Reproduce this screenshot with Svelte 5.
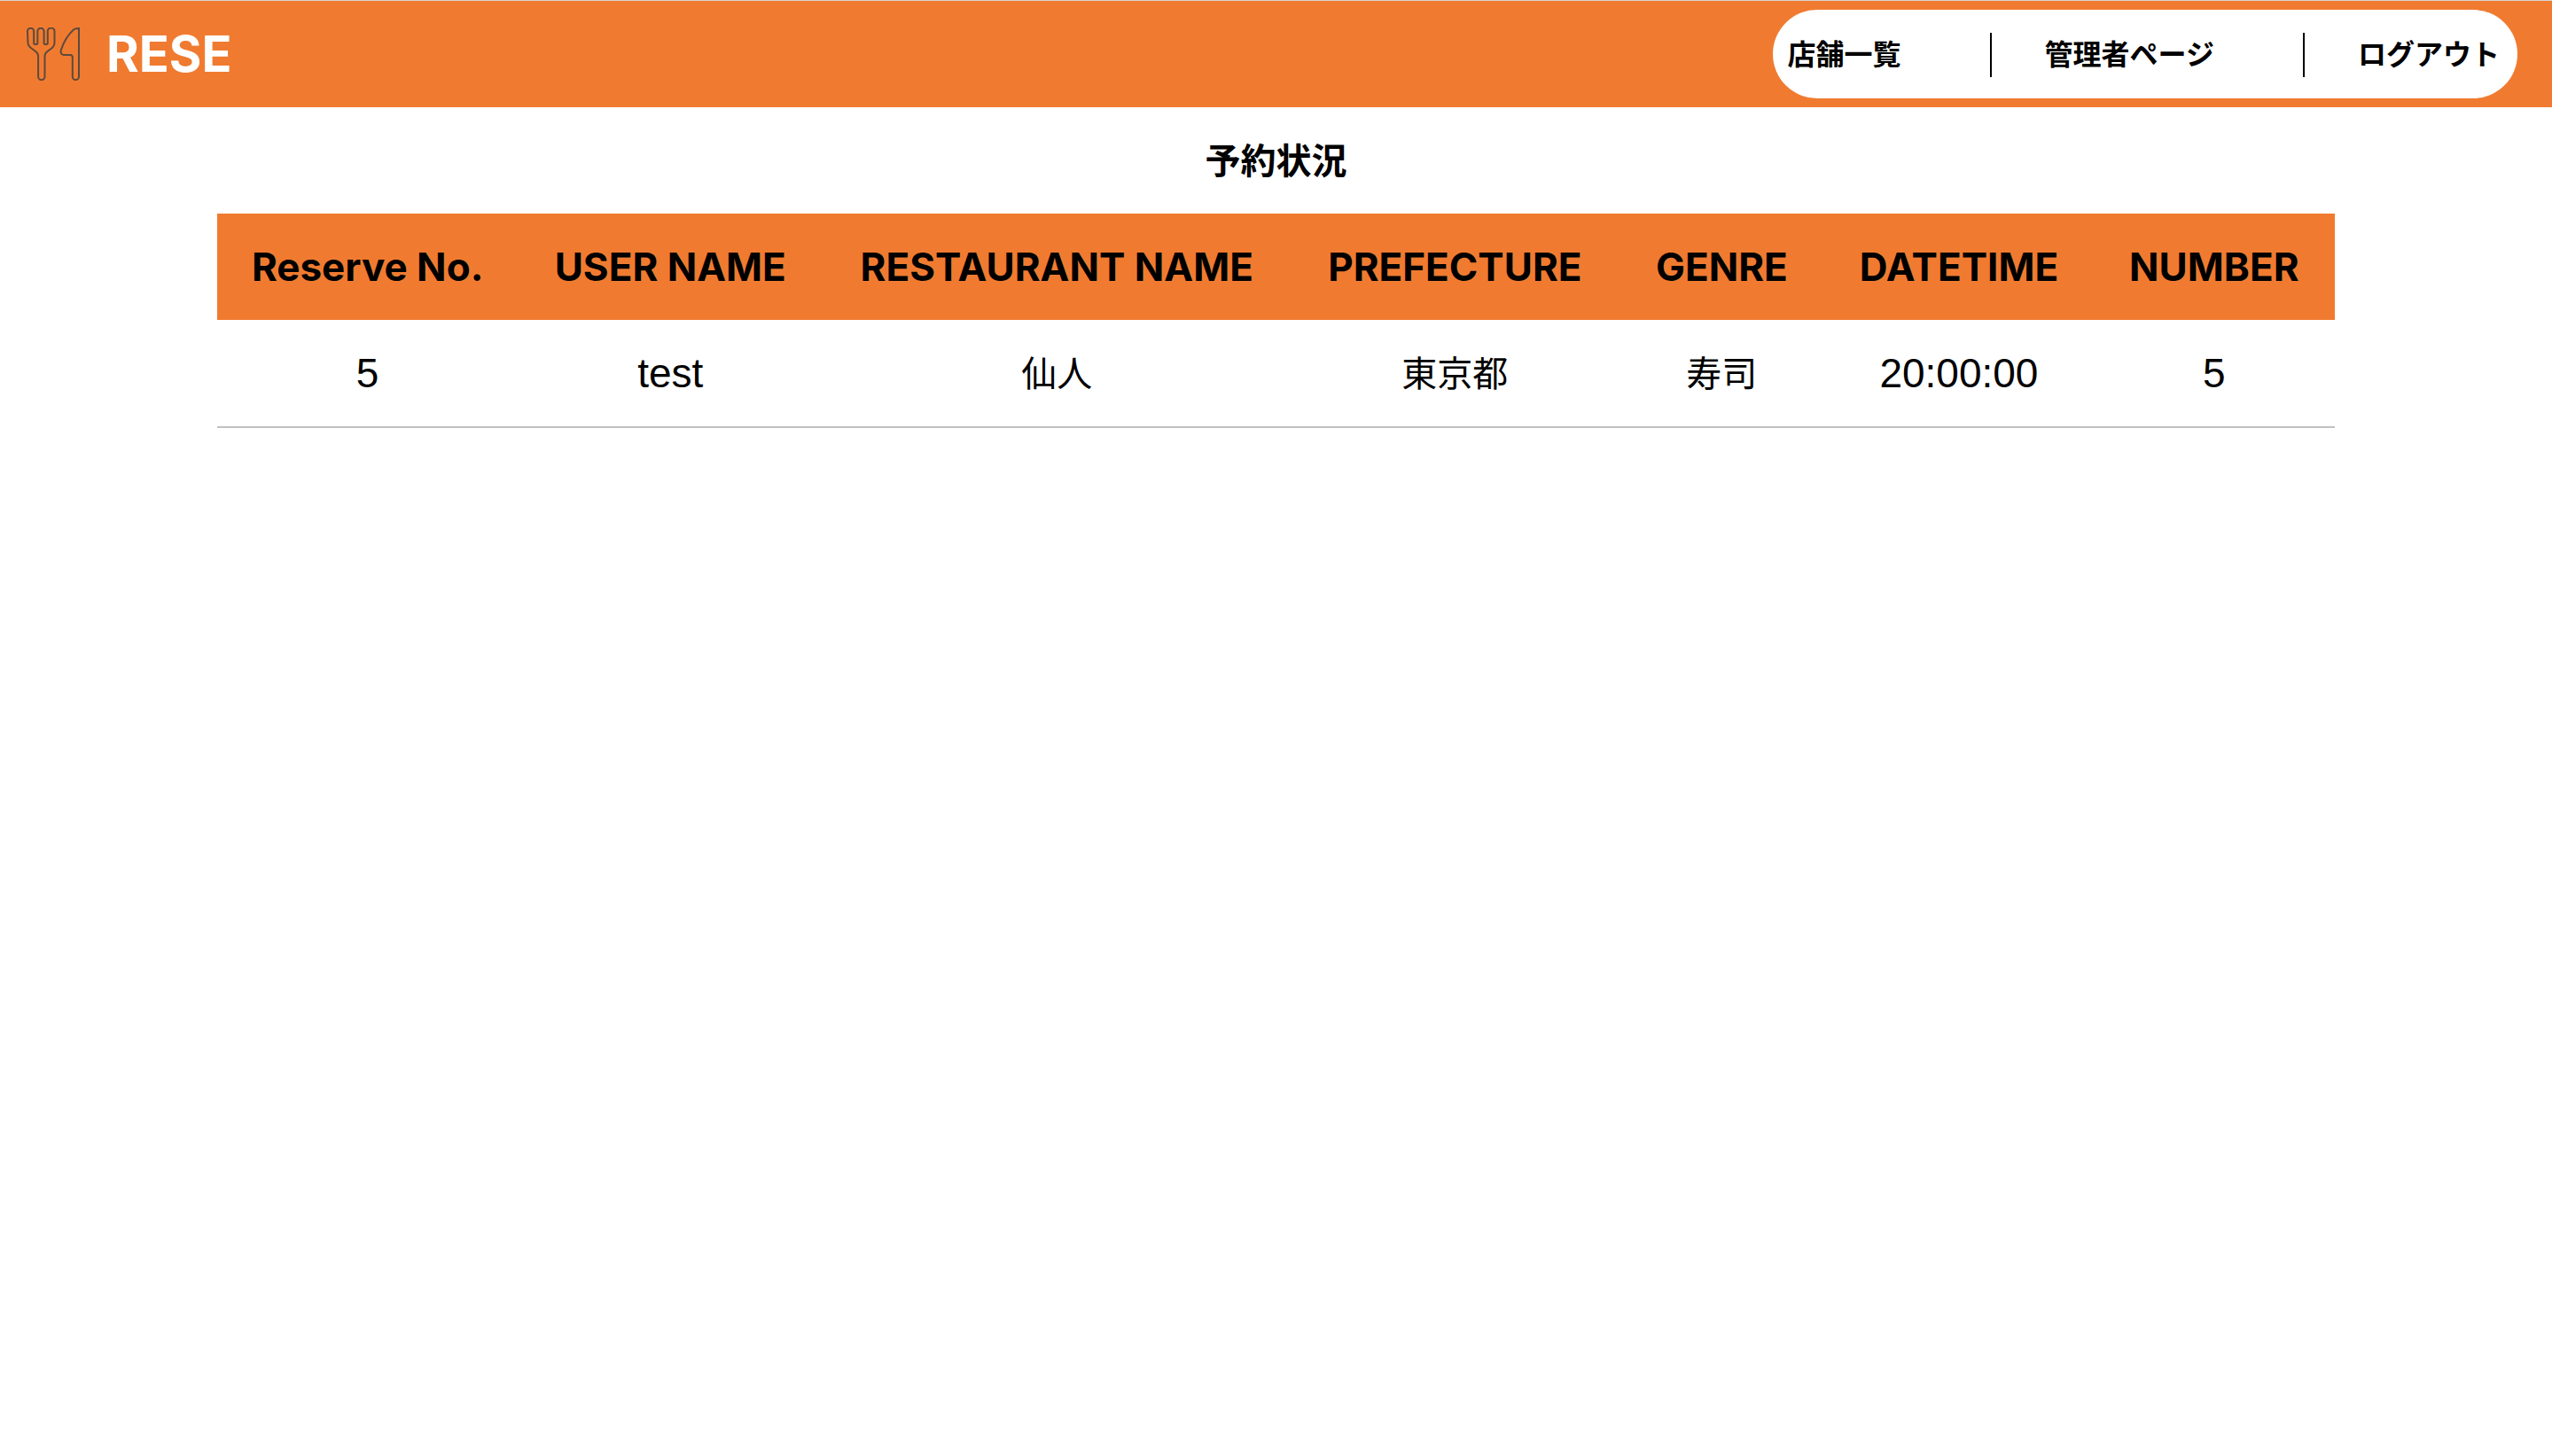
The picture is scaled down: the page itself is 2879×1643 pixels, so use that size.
<script>
  const links = [
    { label: '店舗一覧', href: '#shops' },
    { label: '管理者ページ', href: '#admin' },
    { label: 'ログアウト', href: '#logout' }
  ];

  const columns = [
    { label: 'Reserve No.', share: 14.2 },
    { label: 'USER NAME', share: 14.4 },
    { label: 'RESTAURANT NAME', share: 22.1 },
    { label: 'PREFECTURE', share: 15.5 },
    { label: 'GENRE', share: 9.7 },
    { label: 'DATETIME', share: 12.7 },
    { label: 'NUMBER', share: 11.4 }
  ];

  const reservations = [
    { id: 5, user: 'test', restaurant: '仙人', prefecture: '東京都', genre: '寿司', time: '20:00:00', number: 5 }
  ];
</script>

<header class="header">
  <a class="brand" href="#home">
    <svg class="logo" viewBox="0 0 60 60" aria-hidden="true">
      <path d="M1 4.300a3.600 3.600 0 0 1 7.200 0V17.500a1.500 1.500 0 0 0 1.500 1.500h1.200a1.500 1.500 0 0 0 1.500-1.500V4.300a3.600 3.600 0 0 1 7.200 0V17.500a1.500 1.500 0 0 0 1.500 1.500h1.200a1.500 1.500 0 0 0 1.500-1.500V4.300a3.600 3.600 0 0 1 7.700 0V17c0 3-1 5-4 7l-4 3c-2 1.500-3 3-3 5.500V55.500a3.700 3.700 0 0 1-7.400 0V32.500c0-2.500-1-4-3-5.500l-4-3c-3-2-4.600-4-4.600-7z" />
      <path d="M59 1V55.500a3.600 3.600 0 0 1-7.200 0V33.500a2.500 2.500 0 0 0-2.500-2.500H42c-3 0-4-3-3-6C42 16 48 7 53 2.500 55 .8 57 1 59 1z" />
    </svg>
    <span>RESE</span>
  </a>
  <nav class="nav">
    {#each links as link}
      <a class="nav-link" href={link.href}>{link.label}</a>
    {/each}
  </nav>
</header>

<main class="main">
  <h1 class="title">予約状況</h1>
  <table class="table">
    <colgroup>
      {#each columns as column}
        <col style:width="{column.share}%" />
      {/each}
    </colgroup>
    <thead>
      <tr>
        {#each columns as column}
          <th scope="col">{column.label}</th>
        {/each}
      </tr>
    </thead>
    <tbody>
      {#each reservations as item}
        <tr>
          <td>{item.id}</td>
          <td>{item.user}</td>
          <td class="ja">{item.restaurant}</td>
          <td class="ja">{item.prefecture}</td>
          <td class="ja">{item.genre}</td>
          <td>{item.time}</td>
          <td>{item.number}</td>
        </tr>
      {/each}
    </tbody>
  </table>
</main>

<style>
  :global(body) {
    margin: 0;
    background: #fff;
    color: #000;
    font-family: Inter, 'Noto Sans CJK JP', sans-serif;
  }

  .header {
    display: flex;
    align-items: center;
    justify-content: space-between;
    box-sizing: border-box;
    padding: 10px 39px 10px 30px;
    border-top: 1px solid #d6d6d6;
    background: #f07b30;
  }

  .brand {
    display: flex;
    align-items: center;
    gap: 30px;
    color: #fff;
    font-size: 56px;
    font-weight: 700;
    line-height: 60px;
    text-decoration: none;
  }

  .logo {
    width: 60px;
    height: 60px;
    fill: none;
    stroke: #5d4a3c;
    stroke-width: 2;
  }

  .nav {
    display: flex;
    align-items: center;
    padding: 26px 20px 24px 17px;
    border-radius: 50px;
    background: #fff;
  }

  .nav-link {
    padding-bottom: 6px;
    color: #000;
    font-family: 'Noto Sans CJK JP', sans-serif;
    font-size: 32px;
    font-weight: 700;
    line-height: 44px;
    text-decoration: none;
    white-space: nowrap;
  }

  .nav-link:not(:last-child) {
    margin-right: 60px;
    padding-right: 100px;
    border-right: 2px solid #000;
  }

  .main {
    padding: 0 245px;
  }

  .title {
    margin: 0;
    padding-bottom: 4px;
    font-family: 'Noto Sans CJK JP', sans-serif;
    font-size: 40px;
    font-weight: 700;
    line-height: 116px;
    text-align: center;
  }

  .table {
    width: 100%;
    table-layout: fixed;
    border-collapse: separate;
    border-spacing: 0;
    font-size: 44px;
    line-height: 120px;
    text-align: center;
    white-space: nowrap;
  }

  th,
  td {
    padding: 0;
  }

  th {
    background: #f07b30;
    font-weight: 700;
  }

  td {
    border-bottom: 2px solid #c0c0c0;
    font-family: 'Liberation Sans', sans-serif;
    font-size: 46px;
  }

  .ja {
    padding-bottom: 4px;
    font-family: 'Noto Sans CJK JP', sans-serif;
    font-size: 40px;
    line-height: 116px;
  }
</style>
